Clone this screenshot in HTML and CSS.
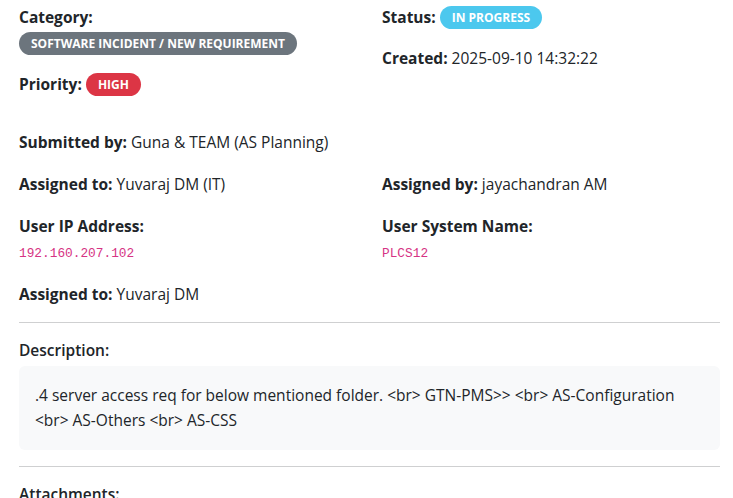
FILE: index.html
```html
<!DOCTYPE html>
<html lang="en">
<head>
<meta charset="utf-8">
<title>Ticket details</title>
<link rel="stylesheet" href="styles.css">
</head>
<body>
<div class="details">
  <div class="row top-row">
    <div class="col">
      <p class="field field-tight"><strong>Category:</strong></p>
      <div class="badge-line"><span class="badge badge-secondary">Software Incident / New Requirement</span></div>
      <p class="field field-priority"><strong>Priority:</strong> <span class="badge badge-danger">High</span></p>
    </div>
    <div class="col">
      <p class="field field-status"><strong>Status:</strong> <span class="badge badge-info">In Progress</span></p>
      <p class="field"><strong>Created:</strong> 2025-09-10 14:32:22</p>
    </div>
  </div>

  <p class="field field-submitted"><strong>Submitted by:</strong> Guna &amp; TEAM (AS Planning)</p>

  <div class="row">
    <div class="col">
      <p class="field"><strong>Assigned to:</strong> Yuvaraj DM (IT)</p>
    </div>
    <div class="col">
      <p class="field"><strong>Assigned by:</strong> jayachandran AM</p>
    </div>
  </div>

  <div class="row">
    <div class="col">
      <p class="field field-tight"><strong>User IP Address:</strong></p>
      <code class="code">192.160.207.102</code>
    </div>
    <div class="col">
      <p class="field field-tight"><strong>User System Name:</strong></p>
      <code class="code">PLCS12</code>
    </div>
  </div>

  <p class="field field-last"><strong>Assigned to:</strong> Yuvaraj DM</p>

  <hr class="divider">

  <h6 class="section-title">Description:</h6>
  <div class="desc-box">.4 server access req for below mentioned folder. &lt;br&gt; GTN-PMS&gt;&gt; &lt;br&gt; AS-Configuration &lt;br&gt; AS-Others &lt;br&gt; AS-CSS</div>

  <hr class="divider divider-2">

  <h6 class="section-title">Attachments:</h6>
</div>
</body>
</html>
```

FILE: styles.css
```css
* { box-sizing: border-box; }

html, body {
  margin: 0;
  padding: 0;
  background: #ffffff;
}

body {
  font-family: "Open Sans", "Noto Sans", sans-serif;
  font-size: 15.5px;
  line-height: 24px;
  color: #212529;
}

.details {
  width: 720px;
  padding: 5px 0 0 19px;
}

.row {
  display: grid;
  grid-template-columns: 363px 1fr;
}

.field {
  margin: 0 0 18px 0;
}

.field strong {
  font-weight: 700;
}

.field-tight {
  margin-bottom: 0;
}

.field-status {
  margin-bottom: 17px;
}

.badge-line {
  height: 26px;
  padding-top: 2px;
  margin-bottom: 17px;
}

.field-priority {
  margin-bottom: 0;
}

.top-row {
  margin-bottom: 34px;
}

.field-submitted {
  margin-bottom: 18px;
}

.badge {
  display: inline-block;
  font-size: 12px;
  font-weight: 700;
  line-height: 13px;
  text-transform: uppercase;
  color: #ffffff;
  padding: 5px 12px;
  border-radius: 12px;
  vertical-align: 1px;
}

.badge-secondary { background: #6c757d; }
.badge-danger { background: #dc3545; }
.badge-info { background: #4cc8ee; }

.code {
  display: block;
  font-family: "Liberation Mono", "DejaVu Sans Mono", monospace;
  font-size: 12.8px;
  line-height: 20px;
  color: #d63384;
  margin: 6px 0 18px 0;
}

.field-last {
  margin-bottom: 16px;
}

.divider {
  border: 0;
  border-top: 1px solid #cfd0d1;
  margin: 0 0 15px 0;
  width: 701px;
}

.divider-2 {
  margin-top: 16px;
}

.section-title {
  font-size: 15.5px;
  font-weight: 600;
  line-height: 24px;
  margin: 0 0 4px 0;
}

.desc-box {
  width: 701px;
  background: #f8f9fa;
  border-radius: 6px;
  padding: 17px 16px;
  line-height: 25px;
}
```
